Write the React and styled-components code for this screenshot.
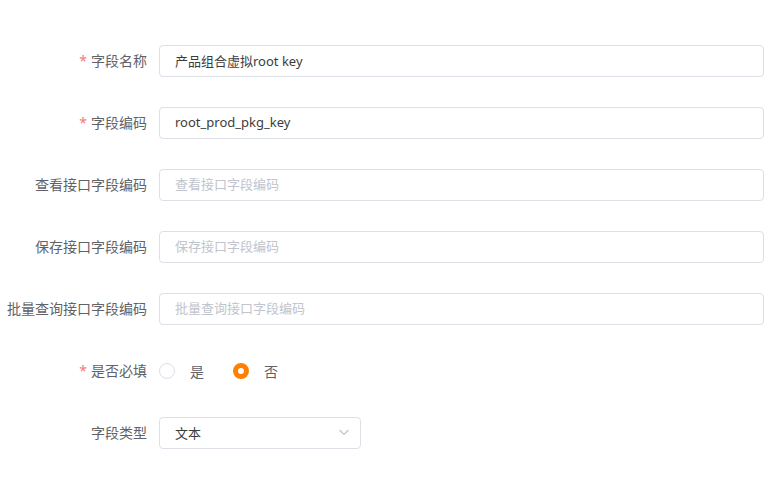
import React from 'react';
import styled, { createGlobalStyle } from 'styled-components';

const GlobalStyle = createGlobalStyle`
  body {
    margin: 0;
    background: #fff;
    font-family: "Noto Sans", "Noto Sans CJK SC", sans-serif;
  }
`;

const Form = styled.form`
  display: flex;
  flex-direction: column;
  gap: 30px;
  padding: 45px 15px 0 0;
`;

const Row = styled.div`
  display: flex;
  align-items: center;
  height: 32px;
`;

const Label = styled.label`
  width: 159px;
  padding: 0 12px 2px 0;
  box-sizing: border-box;
  text-align: right;
  font-size: 14px;
  color: #5f6268;
  flex-shrink: 0;
  white-space: nowrap;
`;

const Star = styled.span`
  color: #f47a7a;
  margin-right: 4px;
`;

const Input = styled.input`
  flex: 1;
  height: 32px;
  box-sizing: border-box;
  padding: 0 15px 2px;
  border: 1px solid #dcdfe6;
  border-radius: 4px;
  font-family: inherit;
  font-size: 13px;
  color: #3c3c3c;
  outline: none;

  &::placeholder {
    color: #c0c4cc;
  }
`;

const RadioGroup = styled.div`
  display: flex;
  align-items: center;
  gap: 29px;
`;

const RadioItem = styled.label`
  display: flex;
  align-items: center;
  gap: 15px;
  font-size: 14px;
  color: #5f6268;
`;

const Dot = styled.span`
  width: 16px;
  height: 16px;
  box-sizing: border-box;
  border-radius: 50%;
  border: ${({ checked }) => (checked ? '5px solid #ff8000' : '1px solid #dcdfe6')};
  background: #fff;
`;

const Select = styled.div`
  width: 202px;
  height: 32px;
  box-sizing: border-box;
  padding: 0 10px 2px 15px;
  border: 1px solid #dcdfe6;
  border-radius: 4px;
  display: flex;
  align-items: center;
  justify-content: space-between;
  font-size: 13px;
  color: #3c3c3c;
`;

const fields = [
  { label: '字段名称', required: true, value: '产品组合虚拟root key' },
  { label: '字段编码', required: true, value: 'root_prod_pkg_key' },
  { label: '查看接口字段编码', placeholder: '查看接口字段编码' },
  { label: '保存接口字段编码', placeholder: '保存接口字段编码' },
  { label: '批量查询接口字段编码', placeholder: '批量查询接口字段编码' },
];

export default function App() {
  return (
    <>
      <GlobalStyle />
      <Form>
        {fields.map(({ label, required, value, placeholder }) => (
          <Row key={label}>
            <Label>
              {required && <Star>*</Star>}
              {label}
            </Label>
            <Input defaultValue={value} placeholder={placeholder} />
          </Row>
        ))}
        <Row>
          <Label>
            <Star>*</Star>
            是否必填
          </Label>
          <RadioGroup>
            <RadioItem>
              <Dot />
              是
            </RadioItem>
            <RadioItem>
              <Dot checked />
              否
            </RadioItem>
          </RadioGroup>
        </Row>
        <Row>
          <Label>字段类型</Label>
          <Select>
            文本
            <svg width="12" height="12" viewBox="0 0 12 12" fill="none">
              <path d="M1.5 4l4.5 4.5L10.5 4" stroke="#c0c4cc" strokeWidth="1.2" />
            </svg>
          </Select>
        </Row>
      </Form>
    </>
  );
}
